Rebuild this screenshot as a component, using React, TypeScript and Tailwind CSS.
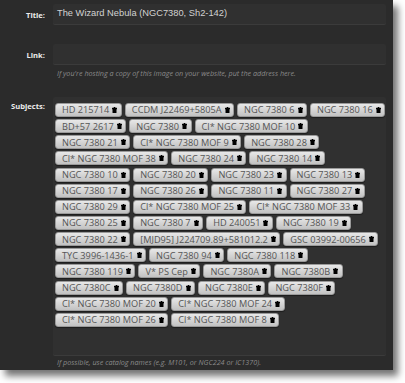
import React from "react";

const rows: string[][] = [
  ["HD 215714", "CCDM J22469+5805A", "NGC 7380 6", "NGC 7380 16"],
  ["BD+57 2617", "NGC 7380", "Cl* NGC 7380 MOF 10"],
  ["NGC 7380 21", "Cl* NGC 7380 MOF 9", "NGC 7380 28"],
  ["Cl* NGC 7380 MOF 38", "NGC 7380 24", "NGC 7380 14"],
  ["NGC 7380 10", "NGC 7380 20", "NGC 7380 23", "NGC 7380 13"],
  ["NGC 7380 17", "NGC 7380 26", "NGC 7380 11", "NGC 7380 27"],
  ["NGC 7380 29", "Cl* NGC 7380 MOF 25", "Cl* NGC 7380 MOF 33"],
  ["NGC 7380 25", "NGC 7380 7", "HD 240051", "NGC 7380 19"],
  ["NGC 7380 22", "[MJD95] J224709.89+581012.2", "GSC 03992-00656"],
  ["TYC 3996-1436-1", "NGC 7380 94", "NGC 7380 118"],
  ["NGC 7380 119", "V* PS Cep", "NGC 7380A", "NGC 7380B"],
  ["NGC 7380C", "NGC 7380D", "NGC 7380E", "NGC 7380F"],
  ["Cl* NGC 7380 MOF 20", "Cl* NGC 7380 MOF 24"],
  ["Cl* NGC 7380 MOF 26", "Cl* NGC 7380 MOF 8"],
];

function Tag({ label }: { label: string }) {
  return (
    <div className="flex h-[14px] items-center rounded-[3px] border border-[#9a9a9a] bg-gradient-to-b from-[#e8e8e8] to-[#c2c2c2] pl-[6px] pr-[3.5px] shadow-[0_1px_1px_rgba(0,0,0,0.4)]">
      <span className="whitespace-nowrap font-['Open_Sans',sans-serif] text-[9.2px] leading-none text-[#555]">
        {label}
      </span>
      <svg width="5" height="6" viewBox="0 0 5 6" className="ml-[3px]">
        <rect x="0" y="0.8" width="5" height="1.2" fill="#000" />
        <rect x="1.7" y="0" width="1.6" height="1" fill="#000" />
        <rect x="0.5" y="1.8" width="4" height="4.2" rx="0.5" fill="#000" />
      </svg>
    </div>
  );
}

export default function App() {
  return (
    <div className="relative h-[383px] w-[405px] overflow-hidden bg-white">
      <div className="h-[370px] w-[393px] bg-[#2b2b2b] pt-[4px] shadow-[5px_6px_7px_rgba(0,0,0,0.55)]">
        {/* Title */}
        <div className="flex">
          <div className="w-[45px] pt-[6px] text-right font-['Open_Sans',sans-serif] text-[7.6px] font-bold leading-[10px] text-[#ececec]">
            Title:
          </div>
          <div className="ml-[8px] flex h-[21px] w-[333px] items-center rounded-[2px] border-b border-[#3b3b3b] bg-[#303030] pl-[4px] font-['Liberation_Sans',Arial,sans-serif] text-[9.3px] text-[#d2d2d2]">
            The Wizard Nebula (NGC7380, Sh2-142)
          </div>
        </div>
        {/* Link */}
        <div className="mt-[19px] flex">
          <div className="w-[45px] pt-[6px] text-right font-['Open_Sans',sans-serif] text-[7.6px] font-bold leading-[10px] text-[#ececec]">
            Link:
          </div>
          <div className="ml-[8px] flex w-[333px] flex-col">
            <div className="h-[21px] rounded-[2px] border-b border-[#3b3b3b] bg-[#303030]" />
            <div className="pl-[4px] pt-[3px] font-['Open_Sans',sans-serif] text-[7.2px] italic leading-[10px] text-[#8a8a8a]">
              If you're hosting a copy of this image on your website, put the address here.
            </div>
          </div>
        </div>
        {/* Subjects */}
        <div className="mt-[19px] flex">
          <div className="w-[45px] pt-[4px] text-right font-['Open_Sans',sans-serif] text-[7.6px] font-bold leading-[10px] text-[#ececec]">
            Subjects:
          </div>
          <div className="ml-[8px] flex w-[333px] flex-col">
            <div className="flex h-[259px] flex-col gap-[2.15px] rounded-[2px] border-b border-[#3b3b3b] bg-[#303030] pl-[2px] pt-[6px]">
              {rows.map((row, i) => (
                <div key={i} className="flex gap-[3px]">
                  {row.map((t) => (
                    <Tag key={t} label={t} />
                  ))}
                </div>
              ))}
            </div>
            <div className="pl-[4px] pt-[1px] font-['Open_Sans',sans-serif] text-[7.2px] italic leading-[10px] text-[#8a8a8a]">
              If possible, use catalog names (e.g. M101, or NGC224 or IC1370).
            </div>
          </div>
        </div>
      </div>
    </div>
  );
}
